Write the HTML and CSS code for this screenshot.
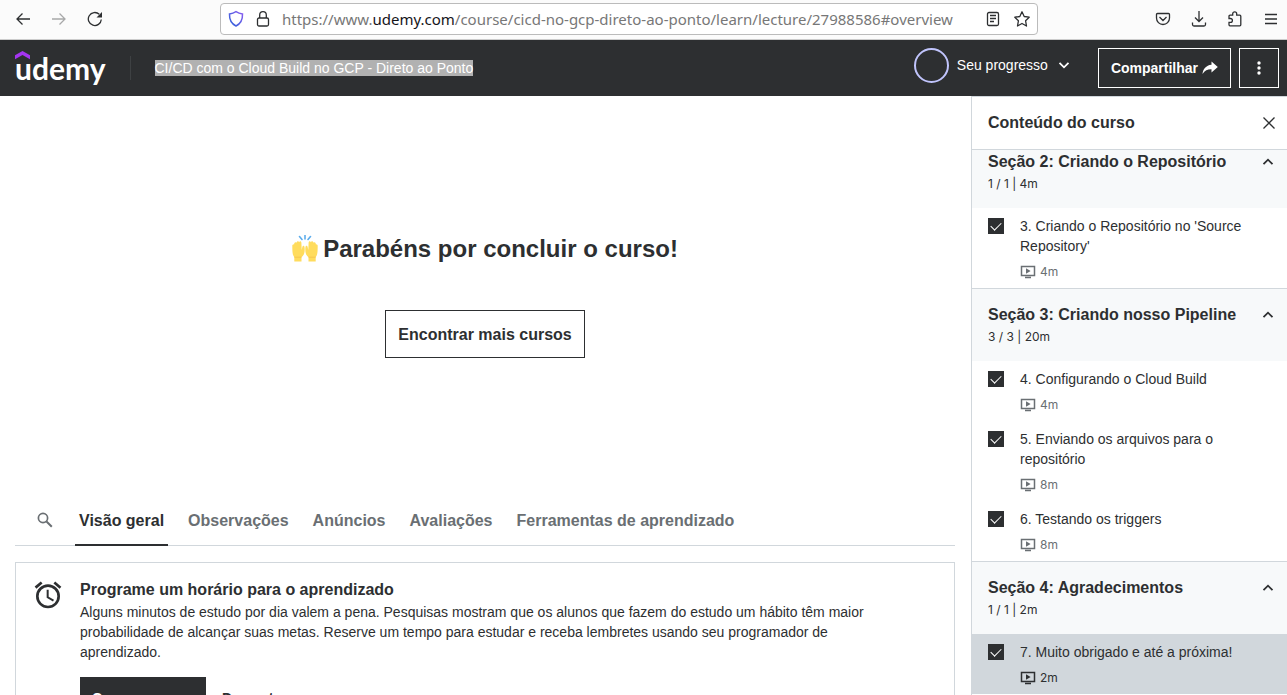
FILE: index.html
```html
<!DOCTYPE html>
<html lang="pt-BR">
<head>
<meta charset="utf-8">
<meta name="viewport" content="width=device-width, initial-scale=1">
<title>CI/CD com o Cloud Build no GCP - Direto ao Ponto | Udemy</title>
<link rel="stylesheet" href="styles.css">
</head>
<body>
<svg class="defs" aria-hidden="true">
  <symbol id="chevron" viewBox="0 0 16 16"><path d="M3.500 10.200 8 5.700l4.500 4.500" fill="none" stroke="currentColor" stroke-width="1.800"/></symbol>
  <symbol id="video" viewBox="0 0 16 14"><path d="M1.500 1.500h13v9h-13zM5 12.500h6" fill="none" stroke="currentColor" stroke-width="1.500"/><path d="M6 3.300v5.400L10.600 6z" fill="currentColor"/></symbol>
</svg>

<div class="browser-bar">
  <nav class="browser-nav" aria-label="Navegador">
    <button class="tool" aria-label="Voltar"><svg width="16" height="16" viewBox="0 0 16 16"><path d="M15 8H2M7.500 2.500 2 8l5.500 5.500"/></svg></button>
    <button class="tool tool-off" aria-label="Avançar" disabled><svg width="16" height="16" viewBox="0 0 16 16"><path d="M1 8h13M8.500 2.500 14 8l-5.500 5.500"/></svg></button>
    <button class="tool" aria-label="Recarregar"><svg width="16" height="16" viewBox="0 0 16 16"><path d="M14.300 8.500A6.500 6.500 0 1 1 12.300 3.300"/><path d="M15 1v5.500H9.500z" fill="currentColor" stroke="none"/></svg></button>
  </nav>
  <div class="url-bar">
    <svg width="16" height="18" viewBox="0 0 16 18" aria-hidden="true"><defs><linearGradient id="shield" x1="0" y1="1" x2="1" y2="0"><stop offset="0" stop-color="#2a62d8"/><stop offset="1" stop-color="#8a5cf0"/></linearGradient></defs><path d="M8 1.700C10 3 12 3.700 14.500 4c.2 5-1.500 9.500-6.500 12C3 13.500 1.300 9 1.500 4 4 3.700 6 3 8 1.700z" fill="none" stroke="url(#shield)" stroke-width="1.500"/></svg>
    <svg class="lock" width="14" height="18" viewBox="0 0 14 18" aria-hidden="true"><rect x="1.500" y="8" width="11" height="8" rx="1.500"/><path d="M3.700 8V5a3.300 3.300 0 0 1 6.600 0v3"/></svg>
    <a class="url" href="#overview">https://www.<b>udemy.com</b>/course/cicd-no-gcp-direto-ao-ponto/learn/lecture/27988586#overview</a>
    <button class="tool" aria-label="Modo de leitura"><svg width="16" height="16" viewBox="0 0 16 16"><rect x="2.500" y="1.500" width="11" height="13" rx="1.500"/><path d="M5 4.500h6M5 7.500h6M5 10.500h4"/></svg></button>
    <button class="tool" aria-label="Favoritar"><svg width="18" height="18" viewBox="0 0 18 18"><path d="m9 1.800 2.200 4.700 5 .7-3.600 3.600.9 5.200L9 13.500 4.500 16l.9-5.200L1.800 7.200l5-.7z" stroke-linejoin="round"/></svg></button>
  </div>
  <div class="browser-tools">
    <button class="tool" aria-label="Pocket"><svg width="16" height="16" viewBox="0 0 16 16"><path d="M2.500 2.500h11a1 1 0 0 1 1 1V7a6.500 6.500 0 0 1-13 0V3.500a1 1 0 0 1 1-1zM4.500 6 8 9.500 11.500 6"/></svg></button>
    <button class="tool" aria-label="Downloads"><svg width="16" height="16" viewBox="0 0 16 16"><path d="M8 0v10.500M4 6.500l4 4 4-4M1.500 11.500v2a1.500 1.500 0 0 0 1.500 1.500h10a1.500 1.500 0 0 0 1.500-1.500v-2"/></svg></button>
    <button class="tool" aria-label="Extensões"><svg width="16" height="16" viewBox="0 0 16 16"><path d="M2 7.500V5.200a1 1 0 0 1 1-1h2.700V2.800a2 2 0 0 1 4 0v1.400h3.100a1 1 0 0 1 1 1v8.600a1 1 0 0 1-1 1H3a1 1 0 0 1-1-1v-2.500h1.500a1.900 1.900 0 0 0 0-3.800z"/></svg></button>
    <button class="tool" aria-label="Menu"><svg width="16" height="16" viewBox="0 0 16 16"><path d="M2 3.500h12M2 8h12M2 12.500h12"/></svg></button>
  </div>
</div>

<header class="course-header">
  <a class="logo" href="#" aria-label="Udemy"><svg width="15" height="9" viewBox="0 0 15 9" aria-hidden="true"><path d="M7.500 0 15 4.300v4L7.500 4 0 8.300v-4z" fill="#a435f0"/></svg>udemy</a>
  <a class="course-title" href="#"><span>CI/CD com o Cloud Build no GCP - Direto ao Ponto</span></a>
  <button class="progress"><span class="ring"></span>Seu progresso<svg class="flip" width="16" height="16" aria-hidden="true"><use href="#chevron"/></svg></button>
  <button class="outline-btn share">Compartilhar<svg width="16" height="16" viewBox="0 0 16 16" aria-hidden="true"><path d="M9.500 1.500 15.800 7l-6.300 5.500V9.300C5.500 9.200 3 10.500.5 14 1 9 4 5.300 9.500 4.700z" fill="currentColor"/></svg></button>
  <button class="outline-btn more" aria-label="Mais opções"><svg width="16" height="16" viewBox="0 0 16 16" fill="currentColor"><circle cx="8" cy="3" r="1.700"/><circle cx="8" cy="8" r="1.700"/><circle cx="8" cy="13" r="1.700"/></svg></button>
</header>

<div class="layout">
  <main class="content">
    <section class="finished">
      <h1><svg width="26" height="27" viewBox="0 0 26 27" aria-hidden="true"><path d="m7.500 1.500 2.500 3M13 0v4M18.500 1.500l-2.500 3" stroke="#5dadec" stroke-width="1.600" stroke-linecap="round"/><path id="hand" d="M2.300 26.500h7.200v-4.300c2.300-1.600 3.200-4.200 3.200-7.700 0-3-.4-4.200-1.500-3.800-1 .3-.9 2.200-1.500 4.300L9.400 8c0-2-1.800-2.200-2.200-.8-.6-1.600-2.500-1.200-2.600.5C3.300 6.700 2.100 7.700 2.200 9.200.8 9 .2 9.900.3 11.400c.1 4.600 0 8.300 2 10.800z" fill="#ffdc5d"/><use href="#hand" transform="matrix(-1 0 0 1 26 0)"/><path d="M2.300 22.200h7.200M16.500 22.200h7.200" stroke="#f2bd4a" stroke-width=".7"/></svg>Parabéns por concluir o curso!</h1>
      <a class="find-more" href="#">Encontrar mais cursos</a>
    </section>

    <nav class="tabs" aria-label="Conteúdo da aula">
      <button class="tab search" aria-label="Pesquisar"><svg width="16" height="16" viewBox="0 0 16 16" aria-hidden="true"><circle cx="6" cy="6" r="4.600" fill="none" stroke="currentColor" stroke-width="1.700"/><path d="m9.500 9.500 5.300 5.300" stroke="currentColor" stroke-width="2"/></svg></button>
      <button class="tab active">Visão geral</button>
      <button class="tab">Observações</button>
      <button class="tab">Anúncios</button>
      <button class="tab">Avaliações</button>
      <button class="tab">Ferramentas de aprendizado</button>
    </nav>

    <section class="schedule">
      <svg class="alarm" width="32" height="32" viewBox="0 0 24 24" aria-hidden="true"><path d="m22 5.720-4.600-3.860-1.290 1.530 4.600 3.860zM7.880 3.390 6.600 1.860 2 5.710l1.290 1.530zM12.500 8H11v6l4.750 2.850.75-1.230-4-2.370zM12 4a9 9 0 1 0 0 18 9 9 0 0 0 0-18zm0 16a7 7 0 1 1 0-14 7 7 0 0 1 0 14z" fill="currentColor"/></svg>
      <div class="schedule-body">
        <h2>Programe um horário para o aprendizado</h2>
        <p>Alguns minutos de estudo por dia valem a pena. Pesquisas mostram que os alunos que fazem do estudo um hábito têm maior probabilidade de alcançar suas metas. Reserve um tempo para estudar e receba lembretes usando seu programador de aprendizado.</p>
        <div class="actions"><button class="primary">Começar agora</button><button class="ghost">Descartar</button></div>
      </div>
    </section>
  </main>

  <aside class="sidebar">
    <header class="sidebar-head">
      <h2>Conteúdo do curso</h2>
      <button class="tool" aria-label="Fechar"><svg width="16" height="16" viewBox="0 0 16 16"><path d="m2.500 2.500 11 11M13.500 2.500l-11 11"/></svg></button>
    </header>

    <section class="chapter">
      <button class="chapter-head stuck"><span class="chapter-name">Seção 2: Criando o Repositório</span><svg width="16" height="16" aria-hidden="true"><use href="#chevron"/></svg><span class="chapter-meta">1 / 1 | 4m</span></button>
      <ul>
        <li><input type="checkbox" id="l3" checked><label for="l3">3. Criando o Repositório no 'Source Repository'</label><span class="time"><svg width="16" height="14" aria-hidden="true"><use href="#video"/></svg>4m</span></li>
      </ul>
    </section>

    <section class="chapter">
      <button class="chapter-head"><span class="chapter-name">Seção 3: Criando nosso Pipeline</span><svg width="16" height="16" aria-hidden="true"><use href="#chevron"/></svg><span class="chapter-meta">3 / 3 | 20m</span></button>
      <ul>
        <li><input type="checkbox" id="l4" checked><label for="l4">4. Configurando o Cloud Build</label><span class="time"><svg width="16" height="14" aria-hidden="true"><use href="#video"/></svg>4m</span></li>
        <li><input type="checkbox" id="l5" checked><label for="l5">5. Enviando os arquivos para o repositório</label><span class="time"><svg width="16" height="14" aria-hidden="true"><use href="#video"/></svg>8m</span></li>
        <li><input type="checkbox" id="l6" checked><label for="l6">6. Testando os triggers</label><span class="time"><svg width="16" height="14" aria-hidden="true"><use href="#video"/></svg>8m</span></li>
      </ul>
    </section>

    <section class="chapter">
      <button class="chapter-head"><span class="chapter-name">Seção 4: Agradecimentos</span><svg width="16" height="16" aria-hidden="true"><use href="#chevron"/></svg><span class="chapter-meta">1 / 1 | 2m</span></button>
      <ul>
        <li class="current"><input type="checkbox" id="l7" checked><label for="l7">7. Muito obrigado e até a próxima!</label><span class="time"><svg width="16" height="14" aria-hidden="true"><use href="#video"/></svg>2m</span></li>
      </ul>
    </section>
  </aside>
</div>
</body>
</html>
```

FILE: styles.css
```css
:root {
  --ink: #2d2f31;
  --muted: #6a6f73;
  --line: #d1d7dc;
  --soft: #f7f9fa;
}

* { box-sizing: border-box; }

body {
  margin: 0;
  height: 100vh;
  display: flex;
  flex-direction: column;
  overflow: hidden;
  color: var(--ink);
  background: #fff;
  font: 14px/20px "Liberation Sans", Arial, sans-serif;
}

h1, h2, p, ul { margin: 0; padding: 0; }
ul { list-style: none; }
a { color: inherit; text-decoration: none; }
svg { flex: none; display: block; }

button {
  margin: 0;
  padding: 0;
  border: 0;
  background: none;
  color: inherit;
  font: inherit;
  cursor: pointer;
}

.find-more, .tab, .chapter-name, .outline-btn, .primary, .ghost { font-weight: 700; }

.defs { position: absolute; width: 0; height: 0; }

.tool svg, .lock {
  fill: none;
  stroke: currentColor;
  stroke-width: 1.3;
}

.tool-off { opacity: 0.4; }

/* Browser toolbar */
.browser-bar {
  flex: none;
  display: flex;
  align-items: center;
  justify-content: space-between;
  height: 40px;
  padding: 0 8px 2px 15px;
  background: #fbfbfb;
  border-bottom: 1px solid #ccc;
}

.browser-nav, .browser-tools { display: flex; gap: 20px; }

.url-bar {
  display: flex;
  align-items: center;
  gap: 12px;
  width: 818px;
  height: 32px;
  padding: 0 6px 0 7px;
  border: 1px solid #bbb;
  border-radius: 4px;
  background: #fff;
}

.url {
  flex: 1;
  overflow: hidden;
  white-space: nowrap;
  color: #777;
  font: 15px/20px "Noto Sans", "Open Sans", sans-serif;
}

.url b { color: #15141a; font-weight: 400; }

/* Course header */
.course-header {
  flex: none;
  display: flex;
  align-items: center;
  height: 56px;
  padding: 0 8px 0 15px;
  color: #fff;
  background: var(--ink);
}

.logo {
  position: relative;
  padding-right: 24px;
  border-right: 1px solid #3e4143;
  font: 700 30px/24px Lato, sans-serif;
}

.logo svg { position: absolute; left: 0; top: -5px; }

.course-title { flex: 1; padding-left: 24px; }
.course-title span { background: #b1b1b1; }

.progress {
  display: flex;
  align-items: center;
  gap: 8px;
  margin-right: 26px;
  padding-bottom: 6px;
}

.ring {
  width: 35px;
  height: 35px;
  border: 2px solid #c0c4fc;
  border-radius: 50%;
}

.flip { transform: rotate(180deg); }

.outline-btn {
  display: flex;
  align-items: center;
  justify-content: center;
  gap: 4px;
  height: 40px;
  padding: 0 12px;
  border: 1px solid #fff;
}

.more { width: 40px; margin-left: 8px; padding: 0; }

/* Main column */
.layout { flex: 1; display: flex; min-height: 0; }
.content { flex: 1; min-width: 0; padding: 0 16px 0 15px; }

.finished {
  display: flex;
  flex-direction: column;
  align-items: center;
  justify-content: center;
  gap: 45px;
  height: 400px;
  padding-bottom: 2px;
}

.finished h1 {
  display: flex;
  align-items: center;
  gap: 5px;
  font-size: 24px;
  line-height: 32px;
}

.find-more {
  padding: 14px 12px 12px;
  border: 1px solid var(--ink);
  font-size: 16px;
}

.tabs {
  display: flex;
  gap: 16px;
  border-bottom: 1px solid var(--line);
}

.tab {
  height: 50px;
  margin-bottom: -1px;
  padding: 2px 4px 0;
  border-bottom: 2px solid transparent;
  color: var(--muted);
  font-size: 16px;
}

.tab.active { color: var(--ink); border-color: var(--ink); }
.search { padding: 0 6px 0 22px; }

.schedule {
  display: flex;
  gap: 16px;
  margin-top: 16px;
  padding: 16px;
  border: 1px solid var(--line);
}

.schedule-body { max-width: 800px; padding-top: 1px; }
.schedule h2, .sidebar h2 { font-size: 16px; line-height: 20px; }
.schedule p { margin-top: 2px; }
.actions { display: flex; gap: 4px; margin-top: 15px; }
.primary, .ghost { height: 42px; padding: 0 12px; }
.primary { color: #fff; background: var(--ink); }

/* Course contents */
.sidebar {
  flex: none;
  width: 316px;
  border-left: 1px solid var(--line);
}

.sidebar-head {
  display: flex;
  align-items: center;
  justify-content: space-between;
  height: 54px;
  padding: 0 10px 0 16px;
  border-top: 1px solid var(--line);
  border-bottom: 1px solid var(--line);
}

.chapter + .chapter { border-top: 1px solid var(--line); }

.chapter-head {
  display: grid;
  grid-template-columns: 1fr auto;
  row-gap: 4px;
  align-items: center;
  width: 100%;
  padding: 16px 11px 16px 16px;
  text-align: left;
  background: var(--soft);
}

.chapter-head.stuck { padding-top: 2px; }
.chapter-name { font-size: 16px; }
.chapter-meta, .time { font: 12px/16px Inter, "Liberation Sans", sans-serif; }

.chapter li {
  display: grid;
  grid-template-columns: 16px 1fr;
  gap: 8px 16px;
  padding: 8px 16px;
}

.chapter li.current { background: var(--line); }

.chapter input {
  appearance: none;
  display: grid;
  place-items: center;
  width: 16px;
  height: 16px;
  margin: 2px 0 0;
  border: 1px solid var(--ink);
}

.chapter input:checked { background: var(--ink); }

.chapter input:checked::before {
  content: "";
  width: 9px;
  height: 5px;
  margin-bottom: 3px;
  border: solid #fff;
  border-width: 0 0 1px 1px;
  transform: rotate(-45deg);
}

.time {
  grid-column: 2;
  display: flex;
  align-items: center;
  gap: 4px;
  color: var(--muted);
}

.current .time { color: var(--ink); }
```
